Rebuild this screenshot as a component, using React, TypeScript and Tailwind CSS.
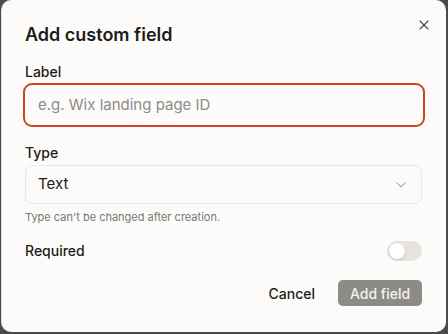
import { ChevronDown, X } from 'lucide-react'

export default function App() {
  return (
    <div className="h-[334px] w-[448px] overflow-hidden bg-[#4a4a48] pl-[1px] font-['Inter',sans-serif]">
      <div className="relative flex h-[332px] w-[445px] flex-col rounded-[10px] border-l border-[#e4e1db] bg-[#fcfbf9] pl-[23px] pr-6 pt-6">
        <button type="button" className="absolute right-[14px] top-[17px] text-[#4a4a48]">
          <X className="h-4 w-4" strokeWidth={1.75} />
        </button>

        <h2 className="text-[18px] font-semibold leading-[22px] text-[#1c1c1a]">Add custom field</h2>

        <label className="mt-[17px] text-[14px] font-medium leading-[18px] text-[#1c1c1a]">Label</label>
        <div className="-ml-[2px] mt-[2px] flex h-[44px] w-[402px] items-center rounded-[9px] border-2 border-[#c84a1c] bg-[#fcfbf9] px-[13px]">
          <span className="text-[15px] text-[#8e8c88]">e.g. Wix landing page ID</span>
        </div>

        <label className="mt-[17px] text-[14px] font-medium leading-[18px] text-[#1c1c1a]">Type</label>
        <div className="mt-[3px] flex h-[39px] w-[397px] items-center justify-between rounded-[7px] border border-[#ebe7e0] bg-[#fcfbf9] pl-[12px] pr-[12px]">
          <span className="text-[15px] text-[#1c1c1a]">Text</span>
          <ChevronDown className="h-4 w-4 text-[#8e8c88]" strokeWidth={1.5} />
        </div>
        <p className="mt-[6px] text-[11px] leading-[14px] text-[#7a7874]">Type can't be changed after creation.</p>

        <div className="mt-[16px] flex w-[397px] items-center justify-between">
          <span className="text-[14px] font-medium text-[#1c1c1a]">Required</span>
          <div className="flex h-[20px] w-[35px] items-center rounded-full bg-[#e6e2dc] p-[2px]">
            <div className="h-[16px] w-[16px] rounded-full bg-white shadow-sm" />
          </div>
        </div>

        <div className="mt-[19px] flex w-[397px] items-center justify-end gap-[23px]">
          <button type="button" className="text-[14px] font-medium text-[#1c1c1a]">
            Cancel
          </button>
          <button
            type="button"
            className="h-[26px] w-[84px] rounded-[5px] bg-[#8c8b88] text-[14px] font-medium text-[#f4f3f0]"
          >
            Add field
          </button>
        </div>
      </div>
    </div>
  )
}
